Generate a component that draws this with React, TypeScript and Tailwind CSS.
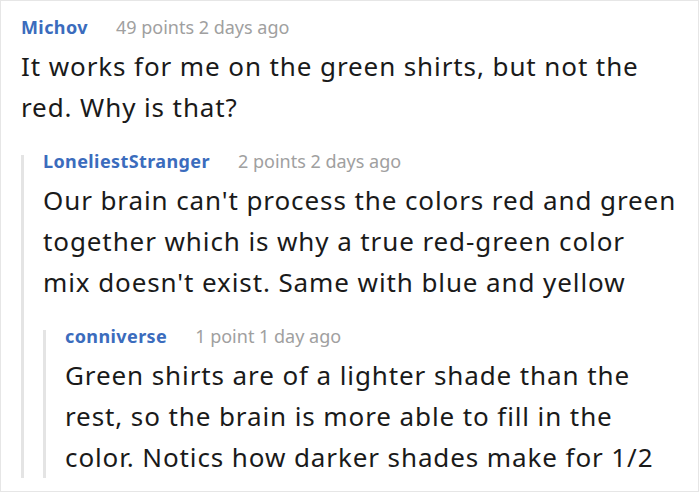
import React from "react";

type Reply = {
  user: string;
  meta: string;
  body: string;
  children?: Reply[];
};

const thread: Reply = {
  user: "Michov",
  meta: "49 points 2 days ago",
  body: "It works for me on the green shirts, but not the red. Why is that?",
  children: [
    {
      user: "LoneliestStranger",
      meta: "2 points 2 days ago",
      body: "Our brain can't process the colors red and green together which is why a true red-green color mix doesn't exist. Same with blue and yellow",
      children: [
        {
          user: "conniverse",
          meta: "1 point 1 day ago",
          body: "Green shirts are of a lighter shade than the rest, so the brain is more able to fill in the color. Notics how darker shades make for 1/2",
        },
      ],
    },
  ],
};

function Comment({ c, nested }: { c: Reply; nested?: boolean }) {
  const leaf = !c.children?.length;
  return (
    <div className={nested ? "mt-[27px] border-l-[3px] border-[#e4e4e4] pl-[19px]" : ""}>
      <div className="flex items-baseline leading-[12px] mb-[13px]">
        <span className="text-[18px] font-bold tracking-[0.4px] text-[#3b6cbd]">{c.user}</span>
        <span className="ml-7 text-[18px] text-[#a0a0a0]">{c.meta}</span>
      </div>
      {/* the leaf's rule stops just under its last line */}
      <p
        className={
          leaf
            ? "text-[26px] leading-[41px] tracking-[0.9px] text-[#1a1a1a] -mb-[7px]"
            : "text-[26px] leading-[41px] tracking-[0.9px] text-[#1a1a1a]"
        }
      >
        {c.body}
      </p>
      {c.children?.map((child) => (
        <Comment key={child.user} c={child} nested />
      ))}
    </div>
  );
}

export default function App() {
  return (
    <div
      className="w-[699px] h-[492px] border border-[#e6e6e6] bg-white pt-[20px] pl-[20px] pr-[20px]"
      style={{ fontFamily: '"Noto Sans", "Open Sans", sans-serif' }}
    >
      <Comment c={thread} />
    </div>
  );
}
